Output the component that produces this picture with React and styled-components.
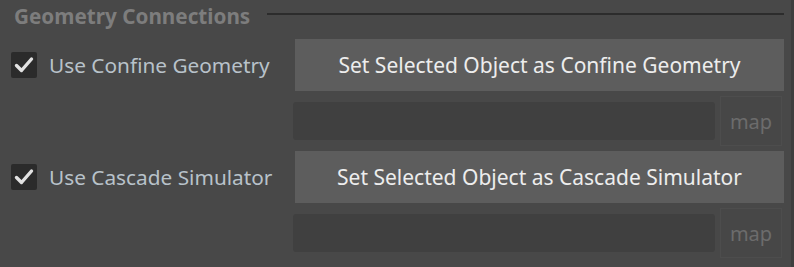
import styled, { createGlobalStyle } from "styled-components";

const GlobalStyled = createGlobalStyle`
  body {
    margin: 0;
    background: #484848;
    font-family: "Noto Sans", "Open Sans", sans-serif;
  }
`;

const Panel = styled.div`
  display: flex;
  width: 794px;
  height: 267px;
  overflow: hidden;
`;

const Content = styled.div`
  flex: 1;
  padding: 0 7px 0 0;
`;

const Scrollbar = styled.div`
  width: 3px;
  background: #3e3e3e;
`;

const Header = styled.div`
  display: flex;
  align-items: center;
  height: 30px;
  padding-left: 14px;
  gap: 17px;
`;

const HeaderTitle = styled.span`
  font-weight: 700;
  font-size: 20.7px;
  color: #7d7d7d;
  white-space: nowrap;
  margin-top: 2px;
`;

const HeaderLine = styled.div`
  flex: 1;
  height: 2px;
  background: #2c2c2c;
  margin-top: -2px;
`;

const Section = styled.div`
  display: flex;
  flex-direction: column;
  margin-top: ${({ top }) => top}px;
`;

const Row = styled.div`
  display: flex;
  align-items: center;
`;

const CheckLabel = styled.label`
  display: flex;
  align-items: center;
  gap: 12px;
  width: 282px;
  padding-left: 11px;
  color: #b8c2ca;
  font-size: 20.8px;
  white-space: nowrap;
`;

const Box = styled.span`
  display: flex;
  align-items: center;
  justify-content: center;
  width: 26px;
  height: 26px;
  border-radius: 2px;
  background: #2b2b2b;
`;

const Button = styled.div`
  display: flex;
  align-items: center;
  justify-content: center;
  margin-left: 2px;
  width: 489px;
  height: 52px;
  background: #5d5d5d;
  color: #ededed;
  font-size: 21px;
`;

const SubRow = styled.div`
  display: flex;
  align-items: center;
  gap: 5px;
  margin: 5px 0 0 293px;
`;

const Field = styled.div`
  width: 422px;
  height: 38px;
  border-radius: 3px;
  background: #404040;
`;

const MapBox = styled.div`
  display: flex;
  align-items: center;
  justify-content: center;
  box-sizing: border-box;
  width: 62px;
  height: 50px;
  border: 1px solid #4d4d4d;
  background: #474747;
  color: #6c6c6c;
  font-size: 20px;
`;

const Check = () => (
  <svg width="20" height="18" viewBox="0 0 20 18">
    <path d="M2.5 9.5 L7.5 14.5 L17.5 3" fill="none" stroke="#e2e2e2" strokeWidth="3.4" strokeLinecap="round" strokeLinejoin="round" />
  </svg>
);

const Connection = ({ label, top }) => (
  <Section top={top}>
    <Row>
      <CheckLabel>
        <Box>
          <Check />
        </Box>
        Use {label}
      </CheckLabel>
      <Button>Set Selected Object as {label}</Button>
    </Row>
    <SubRow>
      <Field />
      <MapBox>map</MapBox>
    </SubRow>
  </Section>
);

export default function App() {
  return (
    <>
      <GlobalStyled />
      <Panel>
        <Content>
          <Header>
            <HeaderTitle>Geometry Connections</HeaderTitle>
            <HeaderLine />
          </Header>
          <Connection label="Confine Geometry" top={9} />
          <Connection label="Cascade Simulator" top={5} />
        </Content>
        <Scrollbar />
      </Panel>
    </>
  );
}
